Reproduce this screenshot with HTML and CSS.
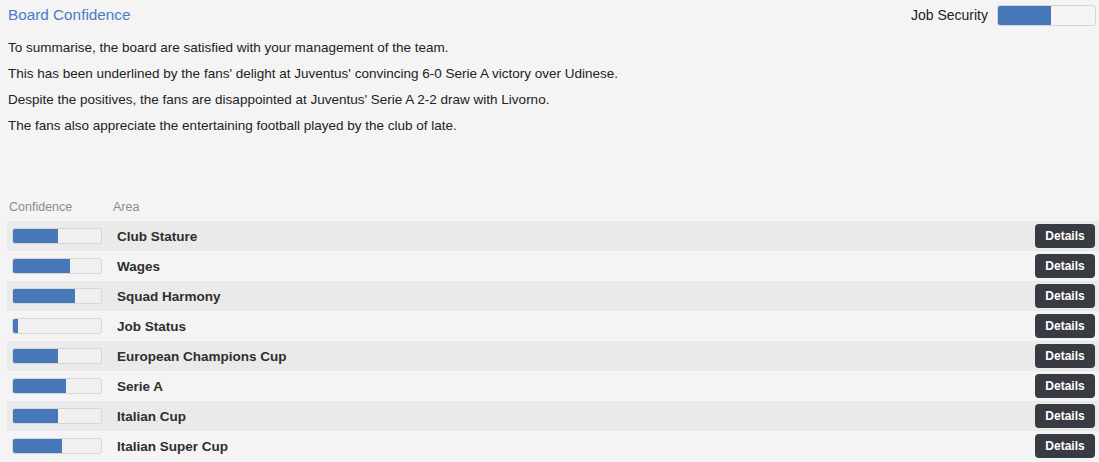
FILE: index.html
```html
<!DOCTYPE html>
<html>
<head>
<meta charset="utf-8">
<link rel="stylesheet" href="styles.css">
</head>
<body>
<div class="page">
  <div class="top">
    <div class="title">Board Confidence</div>
    <div class="security">
      <span class="security-label">Job Security</span>
      <div class="bar bar-lg"><div class="fill" style="width:55%"></div></div>
    </div>
  </div>
  <div class="summary">
    <p>To summarise, the board are satisfied with your management of the team.</p>
    <p>This has been underlined by the fans' delight at Juventus' convincing 6-0 Serie A victory over Udinese.</p>
    <p>Despite the positives, the fans are disappointed at Juventus' Serie A 2-2 draw with Livorno.</p>
    <p>The fans also appreciate the entertaining football played by the club of late.</p>
  </div>
  <div class="table">
    <div class="thead">
      <span class="th-conf">Confidence</span>
      <span class="th-area">Area</span>
    </div>
    <div class="row alt"><div class="bar"><div class="fill" style="width:45px"></div></div><span class="area">Club Stature</span><button class="btn">Details</button></div>
    <div class="row"><div class="bar"><div class="fill" style="width:57px"></div></div><span class="area">Wages</span><button class="btn">Details</button></div>
    <div class="row alt"><div class="bar"><div class="fill" style="width:62px"></div></div><span class="area">Squad Harmony</span><button class="btn">Details</button></div>
    <div class="row"><div class="bar"><div class="fill" style="width:5px"></div></div><span class="area">Job Status</span><button class="btn">Details</button></div>
    <div class="row alt"><div class="bar"><div class="fill" style="width:45px"></div></div><span class="area">European Champions Cup</span><button class="btn">Details</button></div>
    <div class="row"><div class="bar"><div class="fill" style="width:53px"></div></div><span class="area">Serie A</span><button class="btn">Details</button></div>
    <div class="row alt"><div class="bar"><div class="fill" style="width:45px"></div></div><span class="area">Italian Cup</span><button class="btn">Details</button></div>
    <div class="row"><div class="bar"><div class="fill" style="width:49px"></div></div><span class="area">Italian Super Cup</span><button class="btn">Details</button></div>
  </div>
</div>
</body>
</html>
```
FILE: styles.css
```css
html, body {
  margin: 0;
  padding: 0;
  background: #f4f4f4;
}
body {
  font-family: "Liberation Sans", Arial, sans-serif;
  color: #222;
  font-size: 13.5px;
}
.top {
  display: flex;
  justify-content: space-between;
  align-items: center;
  height: 20px;
  padding: 5px 3px 0 8px;
}
.title {
  color: #4a7bc6;
  font-size: 15.3px;
  line-height: 20px;
}
.security {
  display: flex;
  align-items: center;
}
.security-label {
  font-size: 14px;
  color: #222;
  margin-right: 9px;
}
.bar {
  box-sizing: border-box;
  width: 90px;
  height: 16px;
  border: 1px solid #d6d6d6;
  border-radius: 3px;
  background: #f0f0f0;
  overflow: hidden;
  flex: none;
}
.bar-lg {
  width: 99px;
  height: 21px;
  background: #f4f4f4;
}
.fill {
  height: 100%;
  background: #4577b9;
}
.summary {
  margin-top: 10px;
  padding-left: 8px;
}
.summary p {
  margin: 0;
  line-height: 26px;
}
.table {
  margin-top: 60px;
}
.thead {
  display: flex;
  height: 22px;
  line-height: 16px;
  font-size: 12.5px;
  color: #8c8c8c;
}
.th-conf {
  margin-left: 9px;
  width: 104px;
}
.row {
  display: flex;
  align-items: center;
  height: 30px;
  margin-left: 7px;
}
.row.alt {
  background: #eaeaea;
}
.row .bar {
  margin-left: 5px;
}
.area {
  margin-left: 15px;
  font-weight: bold;
  color: #2e2e2e;
  flex: 1;
}
.btn {
  width: 60px;
  height: 24px;
  margin-right: 4px;
  border: none;
  border-radius: 4px;
  background: #393b42;
  color: #fff;
  font-family: "Liberation Sans", Arial, sans-serif;
  font-size: 12px;
  font-weight: bold;
  padding: 0;
}
```
